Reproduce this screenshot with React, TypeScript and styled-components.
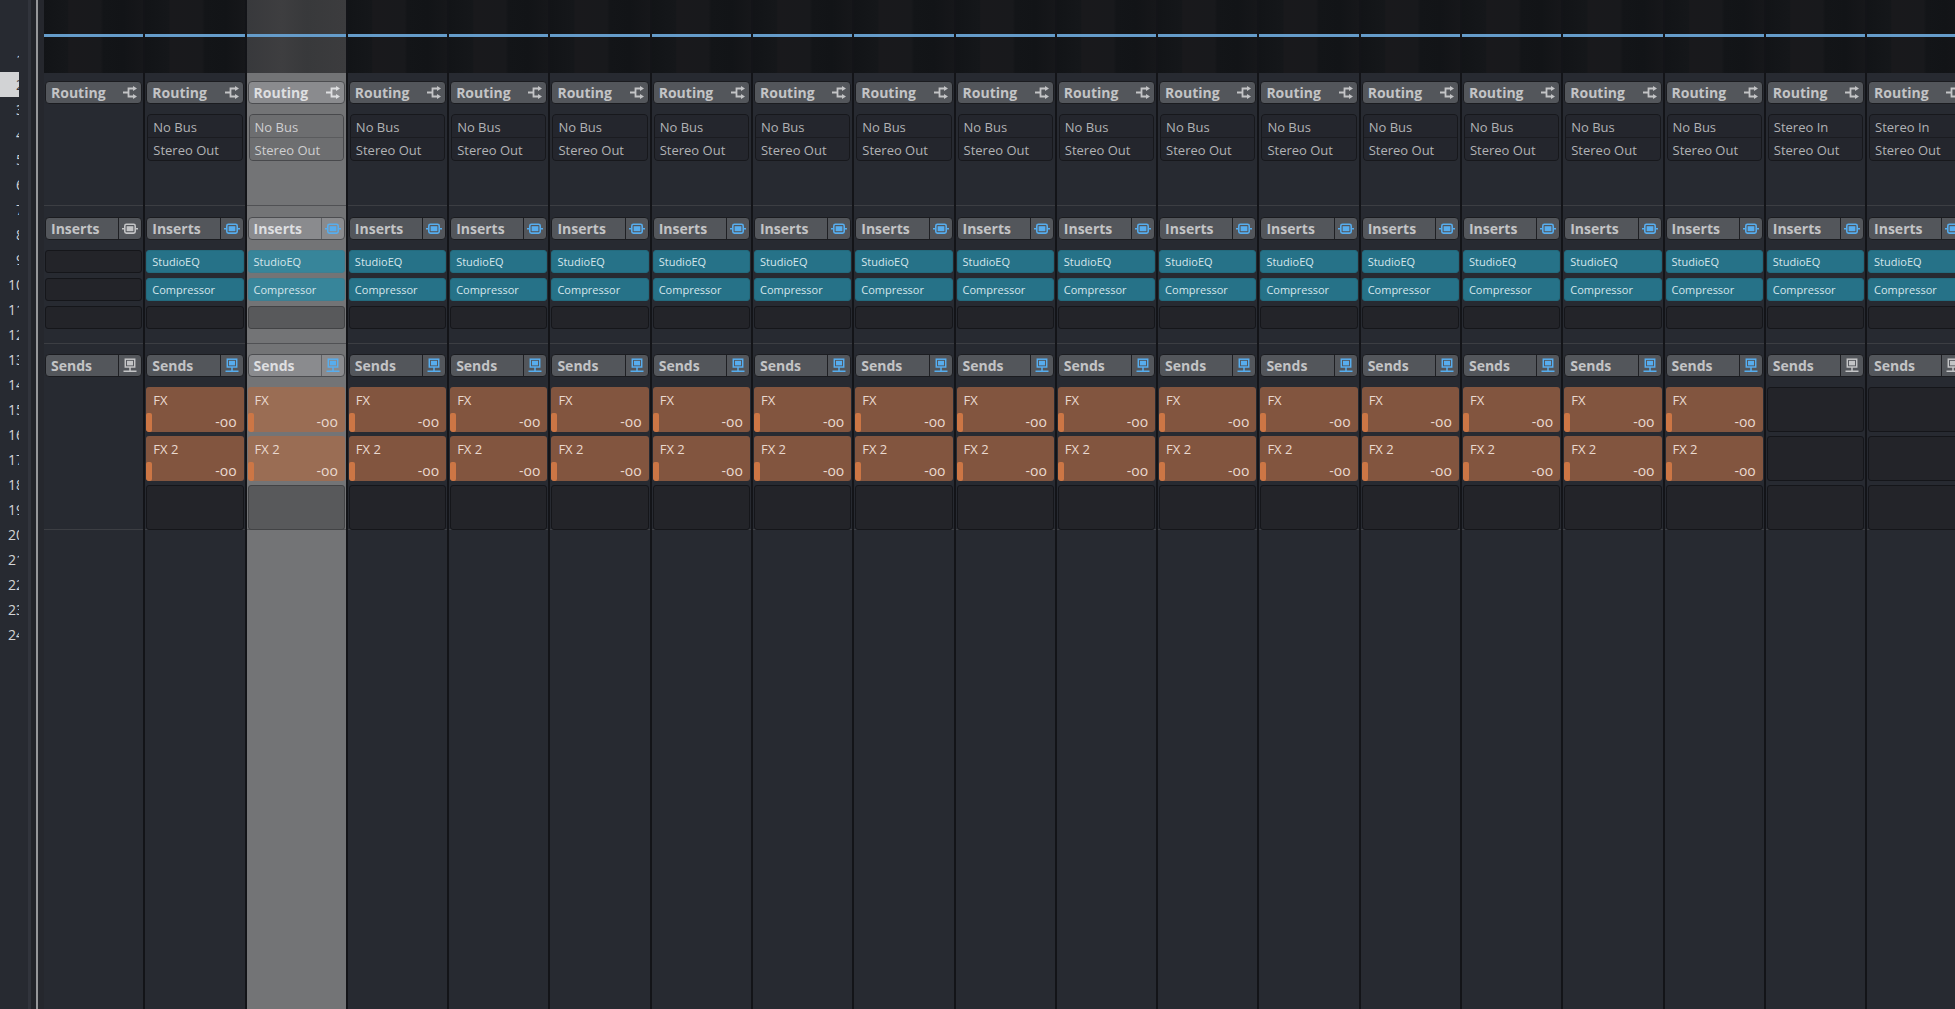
import React from "react";
import styled, { createGlobalStyle } from "styled-components";

const Global = createGlobalStyle`
  * { box-sizing: border-box; }
  html, body, #root { height: 100%; }
  body { margin: 0; background: #272a31; overflow: hidden; font-family: "Open Sans", "Noto Sans", sans-serif; }
  button { font: inherit; color: inherit; border: 0; padding: 0; margin: 0; background: none; text-align: left; }
  h2 { margin: 0; }
`;

const Mixer = styled.main`
  display: flex;
  height: 100%;
  min-height: 540px;
  background: #272a31;
`;

const TrackList = styled.ol`
  width: 19px;
  flex: none;
  margin: 0;
  padding: 47px 0 0;
  list-style: none;
  overflow: hidden;
  font-size: 14px;
  line-height: 26px;
  color: #d3d4d6;
`;

const TrackNumber = styled.li<{ $selected?: boolean }>`
  display: flex;
  justify-content: flex-end;
  width: 24px;
  height: 25px;
  background: ${(p) => (p.$selected ? "#d2d3d5" : "transparent")};
  color: ${(p) => (p.$selected ? "#33353a" : "inherit")};
`;

const Divider = styled.div`
  width: 25px;
  flex: none;
  display: grid;
  grid-template-columns: 9px 3px 5px 2px 6px;
`;

const Stripe = styled.span<{ $color: string }>`
  background: ${(p) => p.$color};
`;

const Channels = styled.section`
  flex: 1;
  min-width: 0;
  display: flex;
  overflow: hidden;
`;

const Channel = styled.article<{ $selected?: boolean }>`
  flex: 0 0 5.3%;
  min-width: 0;
  border-right: 2px solid #131418;
  background: ${(p) => (p.$selected ? "#737476" : "#272a31")};
`;

const Curve = styled.div<{ $selected?: boolean }>`
  height: 73px;
  padding-top: 34px;
  background: ${(p) =>
    p.$selected
      ? "linear-gradient(90deg, #38393c, #3e3e40 35%, #38393b 60%, #3c3c3e)"
      : "linear-gradient(90deg, #121417, #15171a 24%, #19191c 25%, #18191c 57%, #131518 60%, #121417 80%, #16171a)"};
`;

const CurveLine = styled.div`
  height: 3px;
  background: #659cca;
`;

const Rack = styled.section<{ $height: number; $top: number; $selected?: boolean }>`
  height: ${(p) => p.$height}px;
  padding: ${(p) => p.$top}px 1px 0;
  border-bottom: 1px solid ${(p) => (p.$selected ? "#505154" : "#3c3e43")};
`;

const RackHead = styled.header<{ $selected?: boolean }>`
  display: flex;
  height: 23px;
  margin-bottom: 10px;
  border: 1px solid ${(p) => (p.$selected ? "#4c4d50" : "#1b1c20")};
  border-radius: 4px;
  background: ${(p) => (p.$selected ? "#8a8b8e" : "#53565b")};
  color: ${(p) => (p.$selected ? "#dedfe1" : "#c3c4c6")};
`;

const RackTitle = styled.h2`
  flex: 1;
  padding-left: 5px;
  font-size: 14px;
  line-height: 22px;
  font-weight: 700;
`;

const HeadButton = styled.button<{ $on?: boolean; $line?: boolean; $selected?: boolean }>`
  flex: none;
  display: grid;
  place-items: center;
  width: 23px;
  border-left: 1px solid ${(p) => (!p.$line ? "transparent" : p.$selected ? "#606164" : "#1f2024")};
  color: ${(p) => (p.$on ? "#57adee" : "inherit")};
`;

const Bus = styled.div<{ $selected?: boolean }>`
  display: grid;
  gap: 1px;
  margin: 0 1px;
  border: 1px solid ${(p) => (p.$selected ? "#48494c" : "#17181c")};
  border-radius: 4px;
  overflow: hidden;
  background: ${(p) => (p.$selected ? "#5a5b5d" : "#1b1c21")};
`;

const BusButton = styled.button<{ $selected?: boolean }>`
  height: 22px;
  padding-left: 5px;
  font-size: 13px;
  line-height: 24px;
  white-space: nowrap;
  background: ${(p) => (p.$selected ? "#6d6e70" : "#24262d")};
  color: ${(p) => (p.$selected ? "#cfcfd1" : "#b1b2b5")};
`;

const Slots = styled.div`
  display: grid;
  gap: 5px;
`;

const Slot = styled.button<{ $filled?: boolean; $selected?: boolean }>`
  height: 23px;
  padding-left: 5px;
  border: 1px solid ${(p) => (p.$filled ? (p.$selected ? "#3d7f92" : "#236b7e") : p.$selected ? "#424345" : "#15161a")};
  border-radius: 3px;
  background: ${(p) => (p.$filled ? (p.$selected ? "#37859a" : "#267288") : p.$selected ? "#58595b" : "#232429")};
  color: #d5e6ec;
  font-size: 11px;
  line-height: 22px;
`;

const Sends = styled.div`
  display: grid;
  gap: 4px;
`;

const Send = styled.button<{ $filled?: boolean; $selected?: boolean }>`
  display: grid;
  grid-template-columns: 6px 1fr;
  grid-template-rows: 26px 19px;
  height: 45px;
  border: ${(p) => (p.$filled ? "0" : `1px solid ${p.$selected ? "#424345" : "#15161a"}`)};
  border-radius: 3px;
  overflow: hidden;
  background: ${(p) => (p.$filled ? (p.$selected ? "#9a6d54" : "#82553f") : p.$selected ? "#58595b" : "#232429")};
  color: #ead9cf;
`;

const SendName = styled.span`
  grid-column: 1 / -1;
  padding-left: 7px;
  font-size: 13px;
  line-height: 26px;
`;

const SendMeter = styled.span`
  border-radius: 2px;
  background: #cc7645;
`;

const SendLevel = styled.span`
  padding-right: 7px;
  text-align: right;
  font-size: 14px;
  line-height: 18px;
`;

const RoutingIcon = () => (
  <svg width="14" height="13" viewBox="0 0 14 13" fill="none" stroke="currentColor" strokeWidth="1.8">
    <path d="M0 6.5H5M11 2.5H5.5V10.5H11" />
    <path d="M10 0L14 2.5L10 5ZM10 8L14 10.5L10 13Z" fill="currentColor" stroke="none" />
  </svg>
);

const InsertIcon = () => (
  <svg width="16" height="12" viewBox="0 0 16 12" fill="none" stroke="currentColor" strokeWidth="1.6">
    <rect x="2.8" y="1.3" width="10.4" height="8.8" rx="1.6" />
    <path d="M0 5.7H2.8M13.2 5.7H16" />
    <rect x="4.6" y="3.2" width="6.8" height="5" fill="currentColor" stroke="none" />
  </svg>
);

const SendIcon = () => (
  <svg width="14" height="15" viewBox="0 0 14 15" fill="none" stroke="currentColor" strokeWidth="1.5">
    <rect x="2.3" y="1.2" width="9.4" height="7.8" />
    <rect x="4" y="2.8" width="6" height="4.6" fill="currentColor" stroke="none" />
    <path d="M7 9V13M0.5 13.2H13.5" />
  </svg>
);

type ChannelData = {
  name: string;
  input?: string;
  inserts: (string | null)[];
  sends: (string | null)[];
  selected?: boolean;
};

const plugins = ["StudioEQ", "Compressor", null];

const channels: ChannelData[] = [
  { name: "Input", sends: [], inserts: [null, null, null] },
  ...Array.from({ length: 16 }, (_, i) => ({
    name: `Audio ${i + 1}`,
    input: "No Bus",
    inserts: plugins,
    sends: ["FX", "FX 2", null],
    selected: i === 1,
  })),
  ...["FX", "FX 2"].map((name) => ({ name, input: "Stereo In", inserts: plugins, sends: [null, null, null] })),
];

function ChannelStrip({ channel }: { channel: ChannelData }) {
  const { selected, input, inserts, sends } = channel;
  return (
    <Channel $selected={selected} aria-label={channel.name}>
      <Curve $selected={selected}>
        <CurveLine />
      </Curve>
      <Rack $height={133} $top={8} $selected={selected}>
        <RackHead $selected={selected}>
          <RackTitle>Routing</RackTitle>
          <HeadButton aria-label="Routing options">
            <RoutingIcon />
          </HeadButton>
        </RackHead>
        {input && (
          <Bus $selected={selected}>
            <BusButton $selected={selected}>{input}</BusButton>
            <BusButton $selected={selected}>Stereo Out</BusButton>
          </Bus>
        )}
      </Rack>
      <Rack $height={138} $top={11} $selected={selected}>
        <RackHead $selected={selected}>
          <RackTitle>Inserts</RackTitle>
          <HeadButton $line $selected={selected} $on={inserts.some(Boolean)} aria-label="Bypass inserts">
            <InsertIcon />
          </HeadButton>
        </RackHead>
        <Slots>
          {inserts.map((plugin, i) => (
            <Slot key={i} $filled={!!plugin} $selected={selected} aria-label={plugin ?? "Empty insert"}>
              {plugin}
            </Slot>
          ))}
        </Slots>
      </Rack>
      <Rack $height={186} $top={10} $selected={selected}>
        <RackHead $selected={selected}>
          <RackTitle>Sends</RackTitle>
          <HeadButton $line $selected={selected} $on={sends.some(Boolean)} aria-label="Bypass sends">
            <SendIcon />
          </HeadButton>
        </RackHead>
        <Sends>
          {sends.map((send, i) => (
            <Send key={i} $filled={!!send} $selected={selected} aria-label={send ?? "Empty send"}>
              {send && (
                <>
                  <SendName>{send}</SendName>
                  <SendMeter />
                  <SendLevel>-oo</SendLevel>
                </>
              )}
            </Send>
          ))}
        </Sends>
      </Rack>
    </Channel>
  );
}

export default function App() {
  return (
    <Mixer>
      <Global />
      <TrackList>
        {Array.from({ length: 24 }, (_, i) => (
          <TrackNumber key={i} $selected={i === 1}>
            {i + 1}
          </TrackNumber>
        ))}
      </TrackList>
      <Divider>
        <Stripe $color="#272a31" />
        <Stripe $color="#31343c" />
        <Stripe $color="#22242a" />
        <Stripe $color="#96979a" />
        <Stripe $color="#25272d" />
      </Divider>
      <Channels>
        {channels.map((channel) => (
          <ChannelStrip key={channel.name} channel={channel} />
        ))}
      </Channels>
    </Mixer>
  );
}
